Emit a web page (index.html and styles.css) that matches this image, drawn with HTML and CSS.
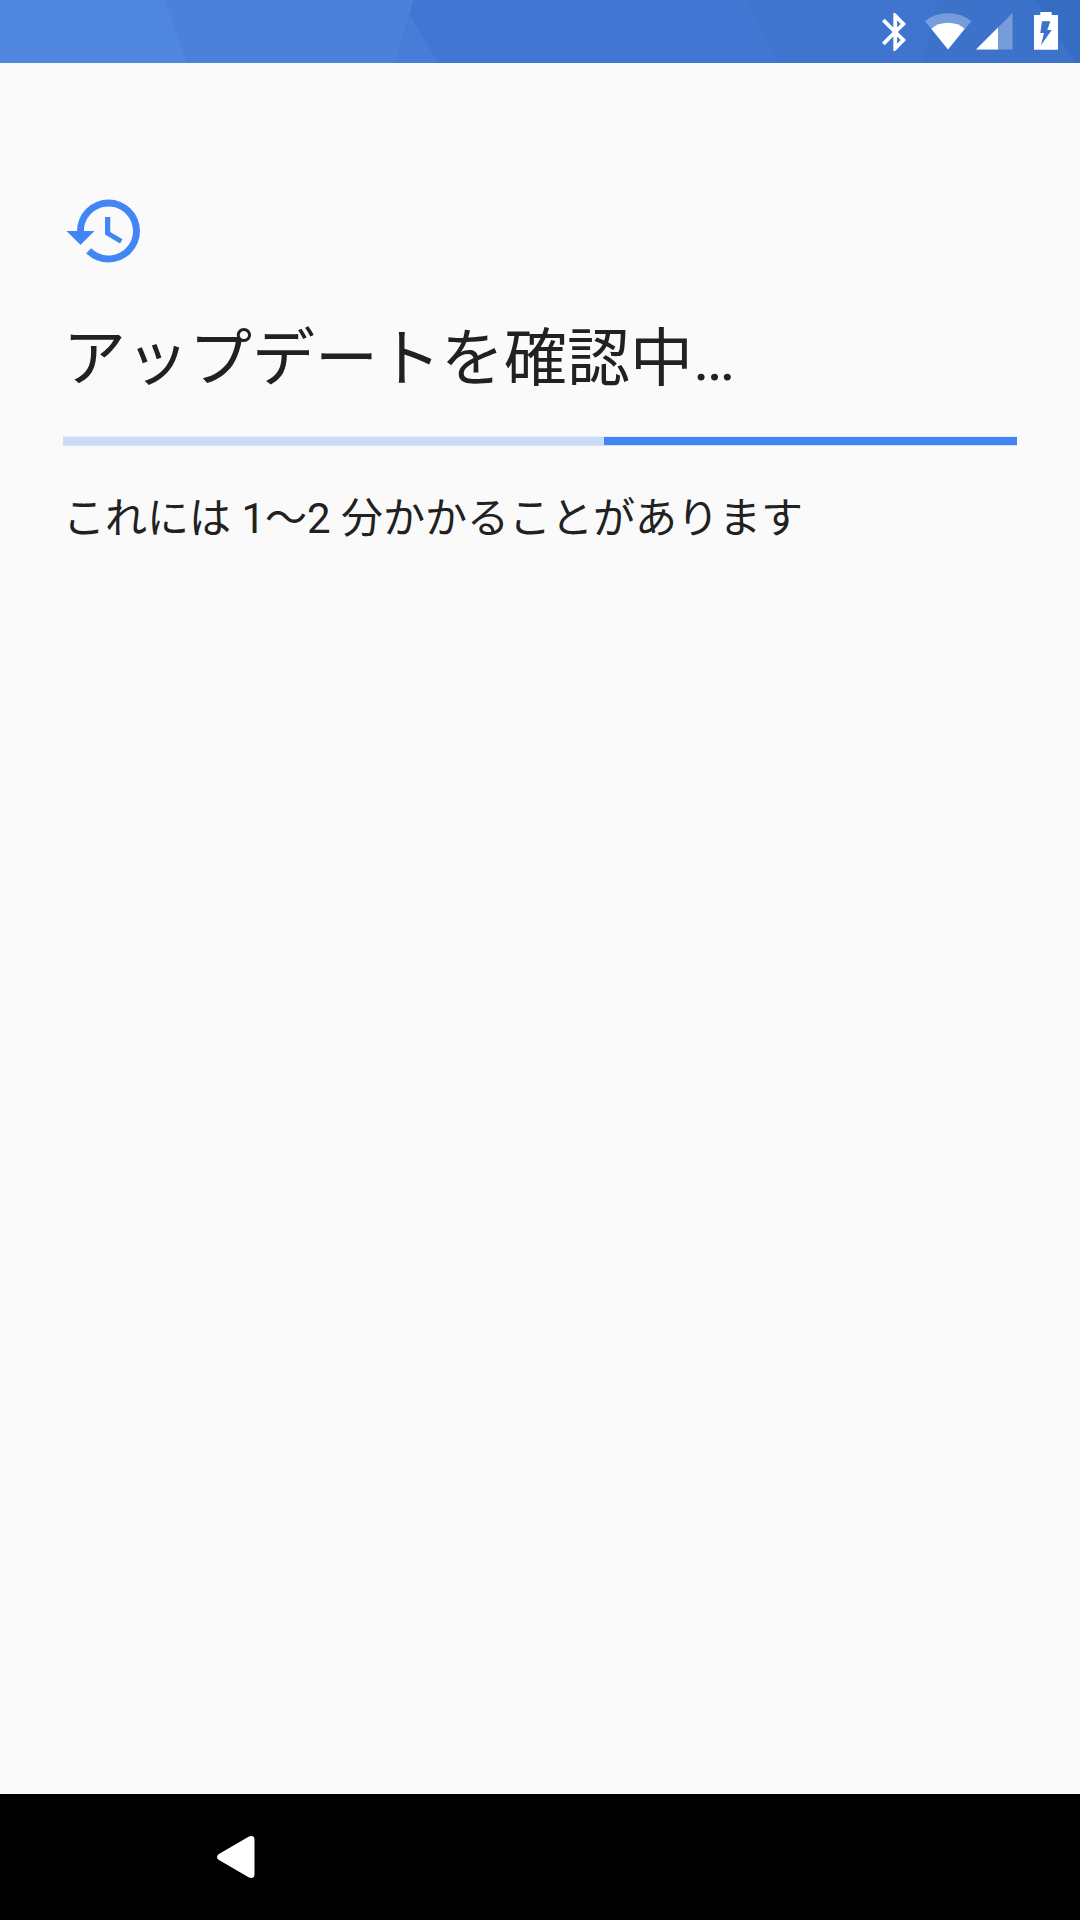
FILE: index.html
```html
<!DOCTYPE html>
<html lang="ja">

<head>
    <meta charset="UTF-8">
    <meta name="viewport" content="width=device-width, initial-scale=1.0">
    <title>アップデートを確認中</title>
    <link rel="stylesheet" href="styles.css">
</head>

<body>
    <div class="screen">
        <div class="status-bar">
            <svg class="status-bg" viewBox="0 0 1080 63">
                <path fill="#4f86e0" d="M0 0h187v63H0z" />
                <path fill="#4b81db" d="M164.500 0H413.500L396 63H187z" />
                <path fill="#467dd8" d="M410 15l29 48h-43z" />
                <path fill="#4177d2" d="M413.500 0H747l32 63H438.500L410 15z" />
                <path fill="#3f74cf" d="M747 0h191.500L922 63H779z" />
                <path fill="#3d72cb" d="M938.500 0H1035l41 63H922z" />
                <path fill="#376cc5" d="M1035 0h45v63h-4z" />
            </svg>
            <svg class="icon-bluetooth" viewBox="5 2 12.710 20">
                <path fill="#fff" d="M17.710 7.710L12 2h-1v7.590L6.410 5 5 6.410 10.590 12 5 17.590 6.410 19 11 14.410V22h1l5.710-5.710-4.300-4.290 4.300-4.290zM13 5.830l1.880 1.880L13 9.590V5.830zm1.880 10.460L13 18.170v-3.760l1.880 1.880z" />
            </svg>
            <svg class="icon-wifi" viewBox=".5 0 47 37">
                <path fill="#fff" fill-opacity=".3" d="M23.500 36.500L.5 8.200Q10 .2 23.500.2T46.800 8.200z" />
                <path fill="#fff" d="M23.500 36.500L6.800 15.700Q13.500 9.700 23.500 9.700T40.200 15.700z" />
            </svg>
            <svg class="icon-signal" viewBox="0 0 37 37">
                <path fill="#fff" fill-opacity=".3" d="M36.500 0v36.500H0z" />
                <path fill="#fff" d="M22 14.500v22H0z" />
            </svg>
            <svg class="icon-battery" viewBox="0 0 24 38">
                <path fill="#fff" fill-rule="evenodd" d="M6.300 0h11.400v3H24v34.700H0V3h6.300zM8 9.300L6.300 21H10L7 33.300 17.700 18H13.300l3-8.700z" />
            </svg>
        </div>

        <div class="content">
            <svg class="icon-history" viewBox="0 0 24 24">
                <path fill="#4285f4" d="M13 3a9 9 0 0 0-9 9H1l3.890 3.890.07.14L9 12H6c0-3.870 3.130-7 7-7s7 3.130 7 7-3.130 7-7 7c-1.930 0-3.680-.79-4.940-2.060l-1.420 1.420A8.950 8.950 0 0 0 13 21a9 9 0 0 0 0-18zm-1 5v5l4.280 2.540.72-1.210-3.500-2.080V8z" />
            </svg>
            <h1 class="title">アップデートを確認中…</h1>
            <div class="progress">
                <div class="progress-value"></div>
            </div>
            <p class="text">これには 1～2 分かかることがあります</p>
        </div>

        <div class="nav-bar">
            <svg class="icon-back" viewBox="0 0 38 42">
                <path fill="#fff" d="M1.500 18.200L32 .5q5.300-1.800 5.500 3v35q-.2 4.800-5.500 3L1.500 23.800q-3-2.800 0-5.600z" />
            </svg>
        </div>
    </div>
</body>

</html>
```

FILE: styles.css
```css
* {
    margin: 0;
    padding: 0;
    box-sizing: border-box;
}

body {
    font-family: Roboto, "Noto Sans CJK JP", sans-serif;
    color: #212121;
    background: #fafafa;
}

svg {
    display: block;
    flex: none;
}

.screen {
    display: flex;
    flex-direction: column;
    width: 1080px;
    height: 1920px;
}

.status-bar {
    position: relative;
    display: flex;
    justify-content: flex-end;
    height: 63px;
    padding: 12px 22px 0 0;
    background: #4076d1;
}

/* icons are drawn above the background shapes */
.status-bar svg {
    position: relative;
}

.status-bar .status-bg {
    position: absolute;
    top: 0;
    left: 0;
    width: 1080px;
    height: 63px;
}

.icon-bluetooth {
    width: 24px;
    height: 38px;
    margin: 1px 19px 0 0;
}

.icon-wifi {
    width: 47px;
    height: 37px;
    margin: 1px 4px 0 0;
}

.icon-signal {
    width: 37px;
    height: 37px;
    margin: 1px 21px 0 0;
}

.icon-battery {
    width: 24px;
    height: 38px;
}

.content {
    flex: 1;
    padding: 126px 63px 0;
}

.icon-history {
    width: 84px;
    height: 84px;
}

.title {
    margin-top: 40px;
    font-size: 63px;
    font-weight: 400;
    line-height: 92px;
    white-space: nowrap;
}

.progress {
    display: flex;
    justify-content: flex-end;
    height: 10px;
    margin-top: 31px;
    border-top: 1px solid #e6eefa;
    border-bottom: 1px solid #d5e2f8;
    background: #c9dbf7;
}

.progress-value {
    width: 413px;
    background: #4285f4;
}

.text {
    margin-top: 42px;
    font-size: 42px;
    line-height: 62px;
    white-space: nowrap;
}

.nav-bar {
    height: 126px;
    padding: 42px 0 0 217px;
    background: #000;
}

.icon-back {
    width: 38px;
    height: 42px;
}
```
